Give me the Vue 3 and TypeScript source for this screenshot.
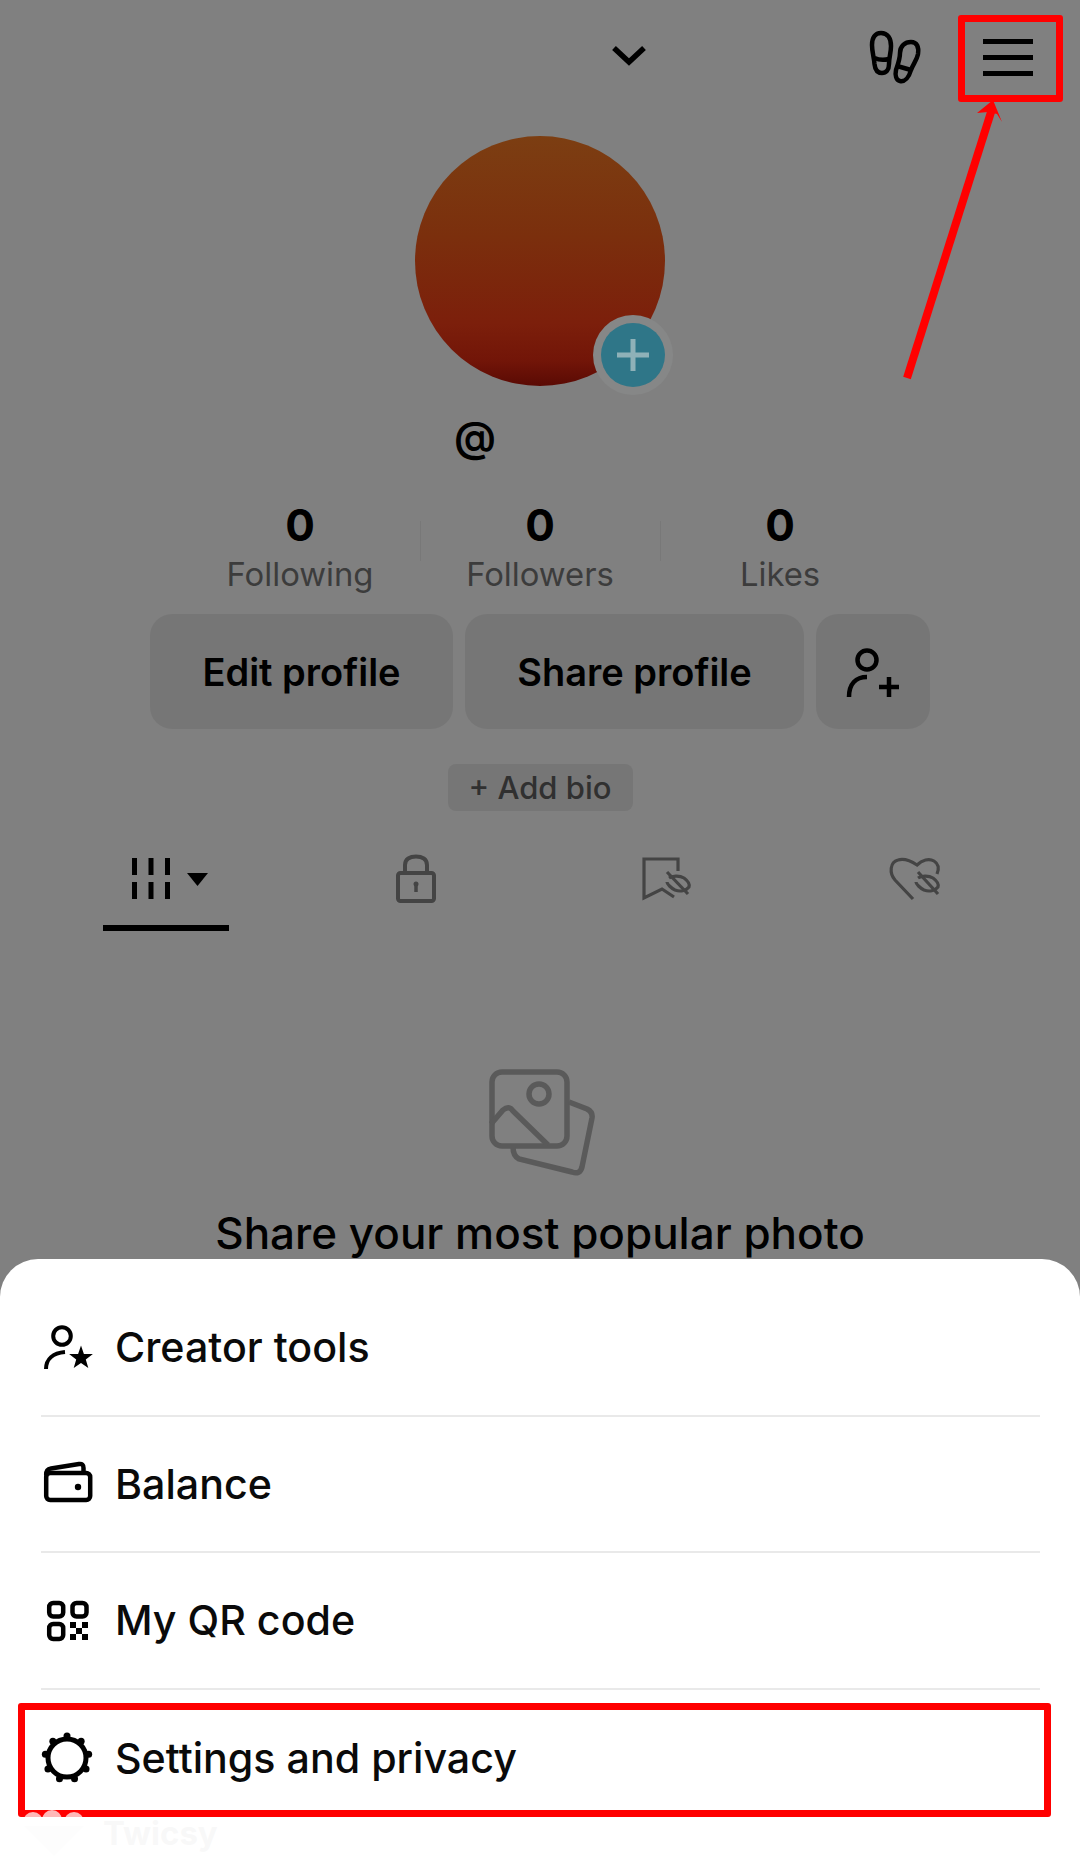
<script setup lang="ts">
const stats = [
  { value: '0', label: 'Following' },
  { value: '0', label: 'Followers' },
  { value: '0', label: 'Likes' },
]
const knobs = Array.from({ length: 9 }, (_, i) => {
  const a = (i * 40 - 90) * (Math.PI / 180)
  return { x: 26 + 22 * Math.cos(a), y: 28 + 22 * Math.sin(a) }
})
</script>

<template>
  <div class="page">
    <header class="topbar">
      <svg class="chevron" width="40" height="28" viewBox="0 0 40 28" fill="none" stroke="#000" stroke-width="5.5">
        <path d="M5 5 L20 19 L35 5" />
      </svg>
      <svg class="feet" width="56" height="58" viewBox="0 0 56 58" fill="none" stroke="#000" stroke-width="4.5">
        <path d="M13 5 C20 5 23 11 23 18 C23 25 21 29 21 36 C21 42 18 45 14 45 C9 45 7 41 6.5 36 C6 29 4 24 4 17 C4 10 7 5 13 5 Z" />
        <path d="M6.5 30 Q13 33 21 31" />
        <path d="M43 14 C49 14 51 19 50 26 C49 32 45 36 43 42 C41 49 37 54 32 53 C28 52 27 47 28 42 C30 36 32 31 32 25 C32 18 37 14 43 14 Z" />
        <path d="M29 38 Q36 40 43 42" />
      </svg>
      <div class="menu-btn"><span></span><span></span><span></span></div>
    </header>

    <div class="avatar-wrap">
      <div class="avatar"></div>
      <div class="avatar-ring">
        <div class="avatar-add">
          <svg width="36" height="36" viewBox="0 0 36 36" stroke="#8fb1b8" stroke-width="5" fill="none">
            <path d="M2 18 H34 M18 2 V34" />
          </svg>
        </div>
      </div>
    </div>

    <div class="handle">@</div>

    <section class="stats">
      <div v-for="(s, i) in stats" :key="s.label" class="stat" :class="{ divided: i > 0 }">
        <div class="stat-value">{{ s.value }}</div>
        <div class="stat-label">{{ s.label }}</div>
      </div>
    </section>

    <section class="actions">
      <div class="btn btn-edit">Edit profile</div>
      <div class="btn btn-share">Share profile</div>
      <div class="btn btn-add">
        <svg width="60" height="60" viewBox="0 0 60 60" fill="none" stroke="#000" stroke-width="4.5">
          <circle cx="24" cy="18" r="9.5" />
          <path d="M6 55 C6 42 13 35 24 35" />
          <path d="M36 45 H56 M46 35 V55" />
        </svg>
      </div>
    </section>

    <div class="bio">+ Add bio</div>

    <nav class="tabs">
      <div class="tab tab-active">
        <svg width="90" height="52" viewBox="0 0 90 52" fill="#000">
          <rect x="11" y="5" width="5" height="17" /><rect x="27.5" y="5" width="5" height="17" /><rect x="44" y="5" width="5" height="17" />
          <rect x="11" y="29" width="5" height="17" /><rect x="27.5" y="29" width="5" height="17" /><rect x="44" y="29" width="5" height="17" />
          <path d="M66 20 H87 L76.5 33 Z" />
        </svg>
        <i class="tab-line"></i>
      </div>
      <div class="tab">
        <svg width="60" height="52" viewBox="0 0 60 52" fill="none" stroke="#444" stroke-width="4">
          <rect x="12" y="20" width="36" height="28" rx="2.5" />
          <path d="M19 19 V12 C19 6 24 3.5 30 3.5 C36 3.5 41 6 41 12 V19" />
          <circle cx="30" cy="31" r="2.5" fill="#444" stroke="none" />
          <path d="M30 31 V39" stroke-width="3.5" />
        </svg>
      </div>
      <div class="tab">
        <svg width="60" height="52" viewBox="0 0 60 52" fill="none" stroke="#444" stroke-width="3.2">
          <path d="M42 18 V6 H8 V45 L26 36 L38 44" />
          <path d="M33 25 C36 23 43 22 48 25 C52 28 54 31 53 34 C50 38 44 39 39 37 C35 35 31 31 31 29" />
          <path d="M31 19 L52 41" />
        </svg>
      </div>
      <div class="tab">
        <svg width="60" height="52" viewBox="0 0 60 52" fill="none" stroke="#444" stroke-width="3.2">
          <path d="M27 46 L9 27 C3 20 4 9 12 7 C19 5 25 8 31 12 C36 7 43 5 48 8 C53 11 53 16 51 21" />
          <path d="M32 25 C35 23 42 22 47 25 C51 28 53 31 52 34 C49 38 43 39 38 37 C34 35 30 31 30 29" />
          <path d="M32 19 L52 41" />
        </svg>
      </div>
    </nav>

    <section class="empty">
      <svg width="110" height="112" viewBox="0 0 110 112" fill="none" stroke="#5a5a5a" stroke-width="5.5">
        <rect x="6" y="5" width="75" height="74" rx="10" />
        <circle cx="53" cy="27" r="10" />
        <path d="M5 57 L17 43 Q23 38 27 44 L62 78" />
        <path d="M83 35 L101 42 Q107 45 106 51 L96 100 Q94 108 86 105 L33 92 Q27 89 27 80" />
      </svg>
      <h2 class="empty-title">Share your most popular photo</h2>
    </section>

    <aside class="sheet">
      <div class="row">
        <svg class="row-icon" width="56" height="56" viewBox="0 0 56 56" fill="none" stroke="#000" stroke-width="4">
          <circle cx="21" cy="17" r="8.8" />
          <path d="M5 50 C5 40 12 34 24 33" />
          <polygon points="40,26.5 42.9,35 51.9,35.1 44.8,40.5 47.3,49.1 40,44 32.7,49.1 35.2,40.5 28.1,35.1 37.1,35" fill="#000" stroke="none" />
        </svg>
        <span>Creator tools</span>
      </div>
      <div class="row">
        <svg class="row-icon" width="56" height="56" viewBox="0 0 56 56" fill="none" stroke="#000" stroke-width="4.5">
          <rect x="5.2" y="17" width="44" height="27" rx="4" />
          <path d="M5.2 19 C5 14 7 13 10 12.5 L38 8 C41 7.5 42.5 9 42.5 12 V16" />
          <circle cx="37" cy="31" r="3.2" fill="#000" stroke="none" />
        </svg>
        <span>Balance</span>
      </div>
      <div class="row">
        <svg class="row-icon" width="56" height="56" viewBox="0 0 56 56" fill="none" stroke="#000" stroke-width="4.5">
          <rect x="8.2" y="11" width="14" height="13.5" rx="4" />
          <rect x="31.5" y="11" width="14" height="13.5" rx="4" />
          <rect x="8.2" y="32" width="14" height="15" rx="4" />
          <g fill="#000" stroke="none">
            <rect x="29" y="30" width="6" height="6" /><rect x="41" y="30" width="6" height="6" />
            <rect x="35" y="36" width="6" height="6" />
            <rect x="29" y="42" width="6" height="6" /><rect x="41" y="42" width="6" height="6" />
          </g>
        </svg>
        <span>My QR code</span>
      </div>
      <div class="row row-last">
        <svg class="row-icon" width="56" height="56" viewBox="0 0 56 56" fill="#000">
          <circle cx="26" cy="28" r="19" fill="none" stroke="#000" stroke-width="5" />
          <circle v-for="(k, i) in knobs" :key="i" :cx="k.x" :cy="k.y" r="3.5" />
        </svg>
        <span>Settings and privacy</span>
      </div>
    </aside>

    <div class="mark mark-menu"></div>
    <div class="mark mark-settings"></div>
    <svg class="arrow" width="120" height="300" viewBox="0 0 120 300" fill="#f00">
      <path d="M4 281 L89 12" stroke="#f00" stroke-width="8" fill="none" />
      <polygon points="90,3 74,16 85,15 94,17 99,25" />
    </svg>
    <div class="watermark">
      <svg width="68" height="50" viewBox="0 0 68 50" fill="rgba(255,255,255,0.72)">
        <circle cx="13" cy="14" r="10" /><circle cx="32" cy="12" r="10" /><circle cx="54" cy="14" r="10" />
        <path d="M4 18 L34 48 L64 18 Z" fill="rgba(252,252,252,0.7)" />
      </svg>
      <span>Twicsy</span>
    </div>
  </div>
</template>

<style>
html, body { margin: 0; background: #808080; }
</style>

<style scoped>
.page {
  position: relative;
  width: 1080px;
  height: 1868px;
  overflow: hidden;
  background: #808080;
  color: #000;
  font-family: Inter, "Liberation Sans", sans-serif;
  display: flex;
  flex-direction: column;
}
.topbar {
  height: 114px;
  margin-bottom: 22px;
  display: flex;
  align-items: center;
  flex: none;
  padding-left: 609px;
}
.chevron { margin-right: 219px; }
.feet { margin-right: 59px; }
.menu-btn {
  width: 50px;
  display: flex;
  flex-direction: column;
  gap: 11px;
}
.menu-btn span { display: block; height: 5px; background: #000; }

.avatar-wrap {
  position: relative;
  align-self: center;
  width: 250px;
  height: 250px;
  flex: none;
}
.avatar {
  width: 100%;
  height: 100%;
  border-radius: 50%;
  background: linear-gradient(180deg, #7c3e12 0%, #7b2f0d 40%, #7c1f0b 75%, #721508 90%, #5a0a04 100%);
}
.avatar-ring {
  position: absolute;
  left: 178px;
  top: 179px;
  width: 80px;
  height: 80px;
  border-radius: 50%;
  background: #868787;
  display: flex;
  align-items: center;
  justify-content: center;
}
.avatar-add {
  width: 64px;
  height: 64px;
  border-radius: 50%;
  background: #2f7688;
  display: flex;
  align-items: center;
  justify-content: center;
}

.handle {
  margin-top: 26px;
  height: 50px;
  line-height: 50px;
  padding-right: 130px;
  text-align: center;
  font-size: 42px;
  font-weight: 600;
}

.stats {
  margin-top: 39px;
  align-self: center;
  width: 720px;
  display: grid;
  grid-template-columns: repeat(3, 240px);
}
.stat {
  position: relative;
  text-align: center;
}
.stat.divided::before {
  content: "";
  position: absolute;
  left: 0;
  top: 20px;
  height: 40px;
  width: 1px;
  background: #787878;
}
.stat-value {
  font-size: 44px;
  line-height: 48px;
  font-weight: 700;
}
.stat-label {
  margin-top: 2px;
  font-size: 32.8px;
  line-height: 46px;
  color: #3c3c3c;
}

.actions {
  margin-top: 17px;
  align-self: center;
  display: flex;
  gap: 12px;
}
.btn {
  height: 115px;
  border-radius: 22px;
  background: #767676;
  display: flex;
  align-items: center;
  justify-content: center;
  font-size: 38px;
  font-weight: 600;
}
.btn-edit { width: 303px; }
.btn-share { width: 339px; }
.btn-add { width: 114px; }

.bio {
  margin-top: 35px;
  align-self: center;
  width: 185px;
  height: 47px;
  border-radius: 8px;
  background: #767676;
  color: #303030;
  font-size: 31px;
  font-weight: 500;
  line-height: 47px;
  text-align: center;
}

.tabs {
  margin-top: 26px;
  margin-left: 41px;
  width: 1000px;
  height: 94px;
  display: grid;
  grid-template-columns: repeat(4, 250px);
  flex: none;
}
.tab {
  display: flex;
  flex-direction: column;
  align-items: center;
  padding-top: 16px;
}
.tab-line {
  display: block;
  margin-top: auto;
  width: 126px;
  height: 6px;
  background: #000;
}

.empty {
  margin-top: 136px;
  display: flex;
  flex-direction: column;
  align-items: center;
}
.empty svg { margin-left: 2px; }
.empty-title {
  margin: 28px 0 0;
  font-size: 44px;
  line-height: 52px;
  font-weight: 500;
  white-space: nowrap;
}

.sheet {
  position: absolute;
  left: 0;
  right: 0;
  top: 1259px;
  bottom: 0;
  box-sizing: border-box;
  padding: 21px 40px 0 41px;
  background: #fff;
  border-radius: 38px 38px 0 0;
}
.row {
  box-sizing: border-box;
  height: 136.5px;
  display: flex;
  align-items: center;
  gap: 18px;
  border-bottom: 2px solid #e9e9e9;
  font-size: 41.2px;
  font-weight: 500;
  color: #0a0a0a;
}
.row-last { border-bottom: 0; }
.row-icon { flex: none; }

.mark {
  position: absolute;
  box-sizing: border-box;
  border: 7px solid #f00;
  border-radius: 3px;
}
.mark-menu { left: 958px; top: 15px; width: 105px; height: 87px; }
.mark-settings { left: 18px; top: 1703px; width: 1033px; height: 114px; }
.arrow { position: absolute; left: 903px; top: 97px; }

.watermark {
  position: absolute;
  left: 20px;
  top: 1808px;
  display: flex;
  align-items: center;
  gap: 15px;
  font-size: 33px;
  font-weight: 700;
  color: rgba(240, 240, 240, 0.45);
}
</style>
